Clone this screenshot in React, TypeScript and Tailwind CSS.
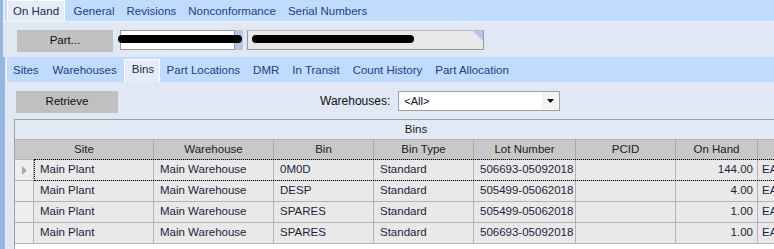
import React from "react";

const rows = [
  { site: "Main Plant", wh: "Main Warehouse", bin: "0M0D", type: "Standard", lot: "506693-05092018", pcid: "", qty: "144.00", uom: "EA" },
  { site: "Main Plant", wh: "Main Warehouse", bin: "DESP", type: "Standard", lot: "505499-05062018", pcid: "", qty: "4.00", uom: "EA" },
  { site: "Main Plant", wh: "Main Warehouse", bin: "SPARES", type: "Standard", lot: "505499-05062018", pcid: "", qty: "1.00", uom: "EA" },
  { site: "Main Plant", wh: "Main Warehouse", bin: "SPARES", type: "Standard", lot: "506693-05092018", pcid: "", qty: "1.00", uom: "EA" },
];

const topTabs = ["General", "Revisions", "Nonconformance", "Serial Numbers"];
const subTabs = ["Part Locations", "DMR", "In Transit", "Count History", "Part Allocation"];

export default function App() {
  return (
    <div className="w-[774px] h-[249px] overflow-hidden flex font-['Liberation_Sans',Arial,sans-serif] text-[11.5px] bg-[#dfe8f4]">
      <div className="w-[3px] h-full bg-[#97b7e3]" />
      <div className="flex-1 flex flex-col min-w-0">
        {/* top tab bar */}
        <div className="h-[21px] flex items-end bg-[#bfdbfd] border-l-2 border-[#e6edf8] pl-[2px] text-[#23407e]">
          <div className="h-[21px] px-[5px] bg-[#e4ecf7] border border-b-0 border-white flex items-start pt-[2px] text-[#1c2d55]">
            On Hand
          </div>
          <div className="flex ml-[3px] gap-[1px] h-full">
            {topTabs.map((t) => (
              <div key={t} className="px-[5.5px] h-full flex items-center pt-[2px] whitespace-nowrap">
                {t}
              </div>
            ))}
          </div>
        </div>
        <div className="h-px bg-[#eef3fa]" />
        {/* part row */}
        <div className="h-[35px] relative flex items-start pt-[8px] bg-[#dfe8f4]">
          <div className="ml-[14px] w-[96px] h-[22px] bg-[#c0c0c0] flex items-center justify-center text-[#111]">
            Part...
          </div>
          <div className="ml-[7px] w-[115px] h-[20px] bg-white border border-[#9a9a9a]" />
          <div className="w-[8px] h-[20px] bg-[#b4c8e2]" />
          <div className="ml-[4px] w-[237px] h-[20px] bg-[#e8e8e8] border border-[#9a9a9a] border-t-[#b8b8b8] relative overflow-hidden">
            <svg className="absolute right-0 top-0" width="10" height="10" viewBox="0 0 10 10">
              <polygon points="0,0 10,0 10,10" fill="#b2c8e6" />
            </svg>
          </div>
          <div className="absolute left-[115px] top-[13px] w-[124px] h-[8px] rounded-full bg-black" />
          <div className="absolute left-[249px] top-[13px] w-[162px] h-[8px] rounded-full bg-black" />
        </div>
        {/* lower area */}
        <div className="flex-1 flex min-h-0">
          <div className="w-[2px] bg-[#97b7e3]" />
          <div className="w-[2px] bg-[#e6edf8]" />
          <div className="flex-1 flex flex-col min-w-0">
            <div className="h-[25px] flex items-end bg-[#bfdbfd] text-[#23407e]">
              <div className="pl-[6px] pr-[7px] h-full flex items-center pt-[3px]">Sites</div>
              <div className="px-[7px] h-full flex items-center pt-[3px]">Warehouses</div>
              <div className="h-[23px] pl-[7px] pr-[5px] bg-[#e4ecf7] border border-b-0 border-white flex items-center pb-[2px] text-[#1c2d55]">
                Bins
              </div>
              {subTabs.map((t) => (
                <div key={t} className="px-[6.5px] h-full flex items-center pt-[3px] whitespace-nowrap">
                  {t}
                </div>
              ))}
            </div>
            <div className="flex-1 flex flex-col bg-[#dfe8f4]">
              <div className="flex items-center mt-[9px] h-[22px]">
                <div className="ml-[9px] w-[102px] h-[22px] bg-[#c0c0c0] flex items-center justify-center text-[#111]">
                  Retrieve
                </div>
                <div className="ml-[202px] text-[12px] text-[#111] pb-[2px]">Warehouses:</div>
                <div className="ml-[8px] w-[162px] h-[20px] mb-[2px] bg-white border border-[#a0a0a0] flex items-center text-[11px] text-[#111]">
                  <div className="flex-1 pl-[5px]">&lt;All&gt;</div>
                  <div className="w-[17px] h-full flex items-center justify-center bg-[#f4f4f4]">
                    <svg width="7" height="4" viewBox="0 0 7 4">
                      <polygon points="0,0 7,0 3.5,4" fill="#111" />
                    </svg>
                  </div>
                </div>
              </div>
              {/* grid */}
              <div className="mt-[6px] ml-[7px] flex-1 bg-white border-l border-t border-[#a0a0a0] text-[#1b1f3b]">
                <div className="w-[802px] h-[20px] bg-[#e1e9f5] border-b border-[#b4b4b4] flex items-center justify-center text-[#222]">
                  Bins
                </div>
                <div className="flex h-[20px] bg-[#c8c8c8] border-b border-[#b4b4b4] text-[#222]">
                  <div className="w-[139px] shrink-0 border-r border-[#a8a8a8] flex items-center justify-center">Site</div>
                  <div className="w-[120px] shrink-0 border-r border-[#a8a8a8] flex items-center justify-center">Warehouse</div>
                  <div className="w-[100px] shrink-0 border-r border-[#a8a8a8] flex items-center justify-center">Bin</div>
                  <div className="w-[100px] shrink-0 border-r border-[#a8a8a8] flex items-center justify-center">Bin Type</div>
                  <div className="w-[102px] shrink-0 border-r border-[#a8a8a8] flex items-center justify-center">Lot Number</div>
                  <div className="w-[100px] shrink-0 border-r border-[#a8a8a8] flex items-center justify-center">PCID</div>
                  <div className="w-[82px] shrink-0 border-r border-[#a8a8a8] flex items-center justify-center">On Hand</div>
                  <div className="w-[80px] shrink-0 border-r border-[#a8a8a8]" />
                </div>
                {rows.map((r, i) => (
                  <div key={i} className="flex h-[21px] border-b border-[#b4b4b4]">
                    <div className="w-[19px] shrink-0 bg-[#efefef] border-r border-[#b4b4b4] flex items-center justify-center">
                      {i === 0 && (
                        <svg width="5" height="9" viewBox="0 0 5 9">
                          <polygon points="0,0 5,4.5 0,9" fill="#a8a8a8" />
                        </svg>
                      )}
                    </div>
                    <div className="flex relative bg-[#e9e9e9]">
                      <div className="w-[120px] shrink-0 border-r border-[#b4b4b4] flex items-center pl-[6px]">{r.site}</div>
                      <div className="w-[120px] shrink-0 border-r border-[#b4b4b4] flex items-center pl-[6px]">{r.wh}</div>
                      <div className="w-[100px] shrink-0 border-r border-[#b4b4b4] flex items-center pl-[6px]">{r.bin}</div>
                      <div className="w-[100px] shrink-0 border-r border-[#b4b4b4] flex items-center pl-[6px]">{r.type}</div>
                      <div className="w-[102px] shrink-0 border-r border-[#b4b4b4] flex items-center pl-[6px]">{r.lot}</div>
                      <div className="w-[100px] shrink-0 border-r border-[#b4b4b4] flex items-center pl-[6px]">{r.pcid}</div>
                      <div className="w-[82px] shrink-0 border-r border-[#b4b4b4] flex items-center justify-end pr-[4px]">{r.qty}</div>
                      <div className="w-[80px] shrink-0 border-r border-[#b4b4b4] flex items-center pl-[4px]">{r.uom}</div>
                      {i === 0 && (
                        <div className="absolute left-0 right-0 top-[-1px] bottom-[-1px] border border-dotted border-black pointer-events-none" />
                      )}
                    </div>
                  </div>
                ))}
              </div>
            </div>
          </div>
        </div>
      </div>
    </div>
  );
}
